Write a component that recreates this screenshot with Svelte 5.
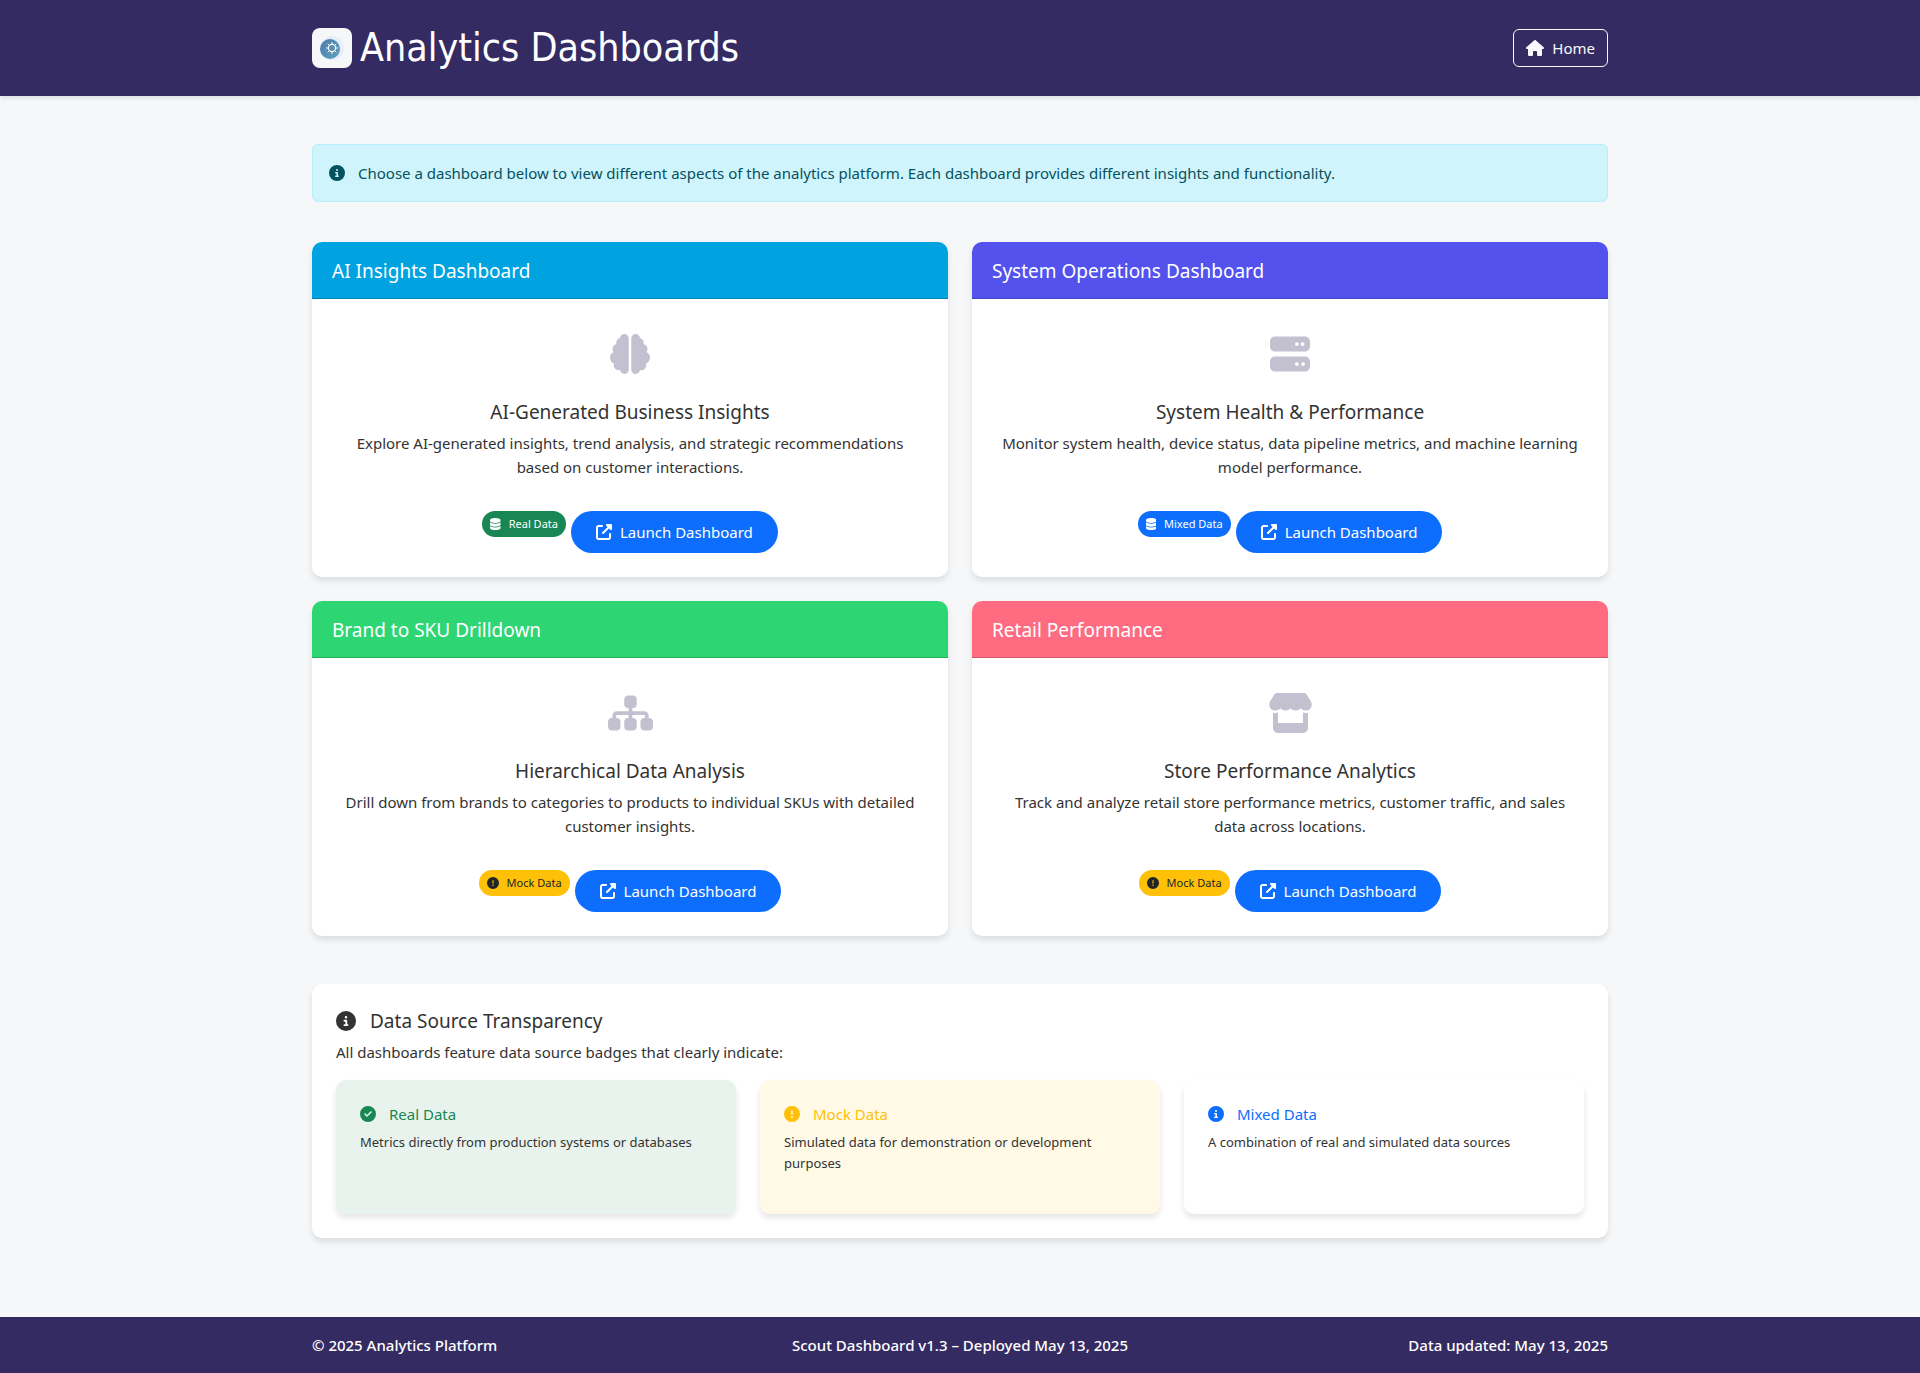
<script>
  const disc = 'M256 512A256 256 0 1 0 256 0a256 256 0 1 0 0 512z';

  // Each icon: [viewBox width, path data]; every icon is 512 units tall.
  const icons = {
    home: [576, 'M575.8 255.5c0 18-15 32.1-32 32.1h-32l.7 160.2c0 2.7-.2 5.4-.5 8.1V472c0 22.1-17.9 40-40 40H456c-1.1 0-2.2 0-3.3-.1c-1.4 .1-2.8 .1-4.2 .1H416 392c-22.1 0-40-17.9-40-40V448 384c0-17.7-14.3-32-32-32H256c-17.7 0-32 14.3-32 32v64 24c0 22.1-17.9 40-40 40H160 128.1c-1.5 0-3-.1-4.5-.2c-1.2 .1-2.4 .2-3.6 .2H104c-22.1 0-40-17.9-40-40V360c0-.9 0-1.9 .1-2.8V287.6H32c-18 0-32-14-32-32.1c0-9 3-17 10-24L266.4 8c7-7 15-8 22-8s15 2 21 7L564.8 231.5c8 7 12 15 11 24z'],
    info: [512, disc + 'M216 336h24V272H216c-13.3 0-24-10.7-24-24s10.7-24 24-24h48c13.3 0 24 10.7 24 24v88h8c13.3 0 24 10.7 24 24s-10.7 24-24 24H216c-13.3 0-24-10.7-24-24s10.7-24 24-24zm40-208a32 32 0 1 1 0 64 32 32 0 1 1 0-64z'],
    check: [512, disc + 'M369 209L241 337c-9.4 9.4-24.6 9.4-33.9 0l-64-64c-9.4-9.4-9.4-24.6 0-33.9s24.6-9.4 33.9 0l47 47L335 175c9.4-9.4 24.6-9.4 33.9 0s9.4 24.6 0 33.9z'],
    alert: [512, disc + 'M256 128c13.3 0 24 10.7 24 24V264c0 13.3-10.7 24-24 24s-24-10.7-24-24V152c0-13.3 10.7-24 24-24zM224 352a32 32 0 1 1 64 0 32 32 0 1 1 -64 0z'],
    database: [448, 'M448 80v48c0 44.2-100.3 80-224 80S0 172.2 0 128V80C0 35.8 100.3 0 224 0S448 35.8 448 80zM393.2 214.7c20.8-7.4 39.9-16.9 54.8-28.6V288c0 44.2-100.3 80-224 80S0 332.2 0 288V186.1c14.9 11.8 34 21.2 54.8 28.6C99.7 230.7 159.5 240 224 240s124.3-9.3 169.2-25.3zM0 346.1c14.9 11.8 34 21.2 54.8 28.6C99.7 390.7 159.5 400 224 400s124.3-9.3 169.2-25.3c20.8-7.4 39.9-16.9 54.8-28.6V432c0 44.2-100.3 80-224 80S0 476.2 0 432V346.1z'],
    launch: [512, 'M352 0c-12.9 0-24.6 7.8-29.6 19.8s-2.2 25.7 6.9 34.9L370.7 96 201.4 265.4c-12.5 12.5-12.5 32.8 0 45.3s32.8 12.5 45.3 0L416 141.3l41.4 41.4c9.2 9.2 22.9 11.9 34.9 6.9s19.8-16.6 19.8-29.6V32c0-17.7-14.3-32-32-32H352zM80 32C35.8 32 0 67.8 0 112V432c0 44.2 35.8 80 80 80H400c44.2 0 80-35.8 80-80V320c0-17.7-14.3-32-32-32s-32 14.3-32 32V432c0 8.8-7.2 16-16 16H80c-8.8 0-16-7.2-16-16V112c0-8.8 7.2-16 16-16H192c17.7 0 32-14.3 32-32s-14.3-32-32-32H80z'],
    brain: [512, 'M184 0c30.9 0 56 25.1 56 56V456c0 30.9-25.1 56-56 56c-28.9 0-52.7-21.9-55.7-50.1c-5.2 1.4-10.7 2.1-16.3 2.1c-35.3 0-64-28.7-64-64c0-7.4 1.3-14.6 3.6-21.2C21.4 367.4 0 338.2 0 304c0-31.9 18.7-59.5 45.8-72.3C37.1 220.8 32 207 32 192c0-30.7 21.6-56.3 50.4-62.6C80.8 123.9 80 118 80 112c0-29.9 20.6-55.1 48.3-62.1C131.3 21.9 155.1 0 184 0zM328 0c28.9 0 52.6 21.9 55.7 49.9c27.8 7 48.3 32.1 48.3 62.1c0 6-.8 11.9-2.4 17.4c28.8 6.2 50.4 31.9 50.4 62.6c0 15-5.1 28.8-13.8 39.7C493.3 244.5 512 272.1 512 304c0 34.2-21.4 63.4-51.6 74.8c2.3 6.6 3.6 13.8 3.6 21.2c0 35.3-28.7 64-64 64c-5.6 0-11.1-.7-16.3-2.1c-3 28.2-26.8 50.1-55.7 50.1c-30.9 0-56-25.1-56-56V56c0-30.9 25.1-56 56-56z'],
    server: [512, 'M64 32C28.7 32 0 60.7 0 96v64c0 35.3 28.7 64 64 64H448c35.3 0 64-28.7 64-64V96c0-35.3-28.7-64-64-64H64zm280 72a24 24 0 1 1 0 48 24 24 0 1 1 0-48zm48 24a24 24 0 1 1 48 0 24 24 0 1 1 -48 0zM64 288c-35.3 0-64 28.7-64 64v64c0 35.3 28.7 64 64 64H448c35.3 0 64-28.7 64-64V352c0-35.3-28.7-64-64-64H64zm280 72a24 24 0 1 1 0 48 24 24 0 1 1 0-48zm56 24a24 24 0 1 1 48 0 24 24 0 1 1 -48 0z'],
    sitemap: [576, 'M208 80c0-26.5 21.5-48 48-48h64c26.5 0 48 21.5 48 48v64c0 26.5-21.5 48-48 48h-8v40H464c30.9 0 56 25.1 56 56v32h8c26.5 0 48 21.5 48 48v64c0 26.5-21.5 48-48 48H464c-26.5 0-48-21.5-48-48V368c0-26.5 21.5-48 48-48h8V288c0-4.4-3.6-8-8-8H312v40h8c26.5 0 48 21.5 48 48v64c0 26.5-21.5 48-48 48H256c-26.5 0-48-21.5-48-48V368c0-26.5 21.5-48 48-48h8V280H112c-4.4 0-8 3.6-8 8v32h8c26.5 0 48 21.5 48 48v64c0 26.5-21.5 48-48 48H48c-26.5 0-48-21.5-48-48V368c0-26.5 21.5-48 48-48h8V288c0-30.9 25.1-56 56-56H264V192h-8c-26.5 0-48-21.5-48-48V80z'],
    store: [576, 'M547.6 103.8L490.3 13.1C485.2 5 476.1 0 466.4 0H109.6C99.9 0 90.8 5 85.7 13.1L28.3 103.8c-29.6 46.8-3.4 111.9 51.9 119.4c4 .5 8.1 .8 12.1 .8c26.1 0 49.3-11.4 65.2-29c15.9 17.6 39.1 29 65.2 29c26.1 0 49.3-11.4 65.2-29c15.9 17.6 39.1 29 65.2 29c26.2 0 49.3-11.4 65.2-29c16 17.6 39.1 29 65.2 29c4.1 0 8.1-.3 12.1-.8c55.5-7.4 81.8-72.5 52.1-119.4zM499.7 254.9l-.1 0c-5.3 .7-10.7 1.1-16.2 1.1c-12.4 0-24.3-1.9-35.4-5.3V384H128V250.6c-11.2 3.5-23.2 5.4-35.6 5.4c-5.5 0-11-.4-16.3-1.1l-.1 0c-4.1-.6-8.1-1.3-12-2.3V384v64c0 35.3 28.7 64 64 64H448c35.3 0 64-28.7 64-64V384 252.6c-4 1-8 1.8-12.3 2.3z'],
  };

  const dashboards = [
    { name: 'AI Insights Dashboard', tone: 'insights', icon: 'brain', title: 'AI-Generated Business Insights', text: 'Explore AI-generated insights, trend analysis, and strategic recommendations based on customer interactions.', badge: 'Real Data', kind: 'real', badgeIcon: 'database' },
    { name: 'System Operations Dashboard', tone: 'operations', icon: 'server', title: 'System Health & Performance', text: 'Monitor system health, device status, data pipeline metrics, and machine learning model performance.', badge: 'Mixed Data', kind: 'mixed', badgeIcon: 'database' },
    { name: 'Brand to SKU Drilldown', tone: 'drilldown', icon: 'sitemap', title: 'Hierarchical Data Analysis', text: 'Drill down from brands to categories to products to individual SKUs with detailed customer insights.', badge: 'Mock Data', kind: 'mock', badgeIcon: 'alert' },
    { name: 'Retail Performance', tone: 'retail', icon: 'store', title: 'Store Performance Analytics', text: 'Track and analyze retail store performance metrics, customer traffic, and sales data across locations.', badge: 'Mock Data', kind: 'mock', badgeIcon: 'alert' },
  ];

  const sources = [
    { name: 'Real Data', kind: 'real', icon: 'check', text: 'Metrics directly from production systems or databases' },
    { name: 'Mock Data', kind: 'mock', icon: 'alert', text: 'Simulated data for demonstration or development purposes' },
    { name: 'Mixed Data', kind: 'mixed', icon: 'info', text: 'A combination of real and simulated data sources' },
  ];
</script>

{#snippet icon(name)}
  <svg class="icon" viewBox="0 0 {icons[name][0]} 512" aria-hidden="true">
    <path fill="currentColor" fill-rule="evenodd" d={icons[name][1]} />
  </svg>
{/snippet}

<header class="bar top">
  <div class="container top-row">
    <div class="brand">
      <svg class="logo" viewBox="0 0 40 40" aria-hidden="true">
        <defs>
          <linearGradient id="orb" x1="0" y1="0" x2="1" y2="1">
            <stop offset="0" stop-color="#4b7aac" />
            <stop offset="1" stop-color="#62a3bd" />
          </linearGradient>
        </defs>
        <rect width="40" height="40" rx="8" fill="#f5f7f9" />
        <circle cx="20" cy="20" r="12" fill="#e6eefc" />
        <circle cx="18" cy="21" r="10" fill="url(#orb)" />
        <g fill="none" stroke="#fff" stroke-linecap="round">
          <circle cx="20" cy="20" r="3.6" stroke-width="1.1" />
          <path stroke-width="1" d="M20 14.4v1.2M20 24.4v1.2M14.4 20h1.2M24.4 20h1.2M16 16l.9 .9M23.1 23.1l.9 .9M24 16l-.9 .9M16.9 23.1l-.9 .9" />
        </g>
      </svg>
      <h1>Analytics Dashboards</h1>
    </div>
    <a class="home" href="#home">{@render icon('home')}Home</a>
  </div>
</header>

<main class="container">
  <div class="notice" role="alert">
    {@render icon('info')}
    <span>Choose a dashboard below to view different aspects of the analytics platform. Each dashboard provides different insights and functionality.</span>
  </div>

  <section class="dashboards" aria-label="Dashboards">
    {#each dashboards as d}
      <article class="card">
        <h2 class="card-head {d.tone}">{d.name}</h2>
        <div class="card-body">
          <div class="emblem">{@render icon(d.icon)}</div>
          <h3>{d.title}</h3>
          <p>{d.text}</p>
          <div class="actions">
            <span class="badge {d.kind}">{@render icon(d.badgeIcon)}{d.badge}</span>
            <a class="launch" href="#launch">{@render icon('launch')}Launch Dashboard</a>
          </div>
        </div>
      </article>
    {/each}
  </section>

  <section class="card transparency">
    <h2>{@render icon('info')}Data Source Transparency</h2>
    <p>All dashboards feature data source badges that clearly indicate:</p>
    <div class="sources">
      {#each sources as s}
        <div class="source {s.kind}">
          <h3>{@render icon(s.icon)}{s.name}</h3>
          <p>{s.text}</p>
        </div>
      {/each}
    </div>
  </section>
</main>

<footer class="bar bottom">
  <div class="container bottom-row">
    <span>© 2025 Analytics Platform</span>
    <span>Scout Dashboard v1.3 – Deployed May 13, 2025</span>
    <span>Data updated: May 13, 2025</span>
  </div>
</footer>

<style>
  :global(body) {
    margin: 0;
    background: #f5f7f9;
    color: #333;
    font: 15px/24px Tahoma, 'Noto Sans', sans-serif;
  }
  :global(#app) {
    display: flex;
    flex-direction: column;
    min-height: 100vh;
  }
  h1, h2, h3, p { margin: 0; font-weight: 400; }
  a { text-decoration: none; }
  .icon { height: 16px; flex: none; display: block; }

  .container {
    box-sizing: border-box;
    width: 100%;
    max-width: 1320px;
    margin: 0 auto;
    padding: 0 12px;
  }
  .bar { background: #352b63; color: #fff; }

  .top { padding: 24px 0; box-shadow: 0 2px 4px rgba(0, 0, 0, .1); }
  .top-row { display: flex; align-items: center; justify-content: space-between; }
  .brand { display: flex; align-items: center; gap: 8px; }
  .logo { width: 40px; height: 40px; display: block; }
  h1 { font: 400 39px/48px Tahoma, 'DejaVu Sans Condensed', sans-serif; }
  .home {
    display: flex;
    align-items: center;
    gap: 8px;
    padding: 6px 12px;
    border: 1px solid #f8f9fa;
    border-radius: 6px;
    color: #f8f9fa;
  }

  main { flex: 1; }
  .notice {
    display: flex;
    align-items: center;
    gap: 13px;
    margin-top: 48px;
    padding: 16px;
    border: 1px solid #b6effb;
    border-radius: 6px;
    background: #cff4fc;
    color: #055160;
  }

  .dashboards {
    display: grid;
    grid-template-columns: repeat(2, 1fr);
    gap: 24px;
    margin: 40px 0 48px;
  }
  .card {
    overflow: hidden;
    border-radius: 10px;
    background: #fff;
    box-shadow: 0 4px 6px rgba(0, 0, 0, .1);
  }
  .card-head {
    padding: 17px 20px 15px;
    border-bottom: 1px solid rgba(0, 0, 0, .18);
    color: #fff;
    font-size: 19px;
  }
  .insights { background-color: #00a3e0; }
  .operations { background-color: #5352ed; }
  .drilldown { background-color: #2ed573; }
  .retail { background-color: #ff6b81; }

  .card-body { padding: 24px; text-align: center; }
  .card-body h3 { margin: 15px 0 7px; font-size: 19px; }
  .card-body p { padding: 0 4px; }
  .emblem {
    display: flex;
    align-items: center;
    justify-content: center;
    height: 62px;
    color: #c3c0d0;
  }
  .emblem .icon { height: 40px; }
  .actions {
    display: flex;
    align-items: flex-start;
    justify-content: center;
    gap: 5px;
    margin-top: 32px;
  }
  .badge {
    display: flex;
    align-items: center;
    gap: 8px;
    padding: 4px 8px;
    border-radius: 13px;
    font-size: 11px;
    line-height: 18px;
  }
  .badge .icon { height: 12px; }
  .badge.real { background: #198754; color: #fff; }
  .badge.mixed { background: #0d6efd; color: #fff; }
  .badge.mock { background: #ffc107; color: #212529; }
  .launch {
    display: flex;
    align-items: center;
    gap: 8px;
    padding: 9px 25px;
    border-radius: 21px;
    background: #0d6efd;
    color: #fff;
  }

  .transparency { margin-bottom: 79px; padding: 25px 24px 24px; }
  .transparency h2 {
    display: flex;
    align-items: center;
    gap: 14px;
    margin-bottom: 7px;
    font-size: 19px;
  }
  .transparency h2 .icon { height: 20px; }
  .sources {
    display: grid;
    grid-template-columns: repeat(3, 1fr);
    gap: 24px;
    margin-top: 16px;
  }
  .source {
    padding: 24px 24px 40px;
    border-radius: 10px;
    box-shadow: 0 4px 6px rgba(0, 0, 0, .1);
  }
  .source h3 {
    display: flex;
    align-items: center;
    gap: 13px;
    margin-bottom: 8px;
    font-size: 15px;
    line-height: 20px;
  }
  .source p { font-size: 13px; line-height: 21px; }
  .source.real { background: #e8f3ee; }
  .source.mock { background: #fff9e6; }
  .source.real h3 { color: #198754; }
  .source.mock h3 { color: #ffc107; }
  .source.mixed h3 { color: #0d6efd; }

  .bottom { padding: 16px 0; font-weight: 500; }
  .bottom-row { display: grid; grid-template-columns: 1fr auto 1fr; }
  .bottom-row span:last-child { text-align: right; }

  @media (max-width: 800px) {
    .dashboards, .sources, .bottom-row { grid-template-columns: 1fr; }
  }
</style>
